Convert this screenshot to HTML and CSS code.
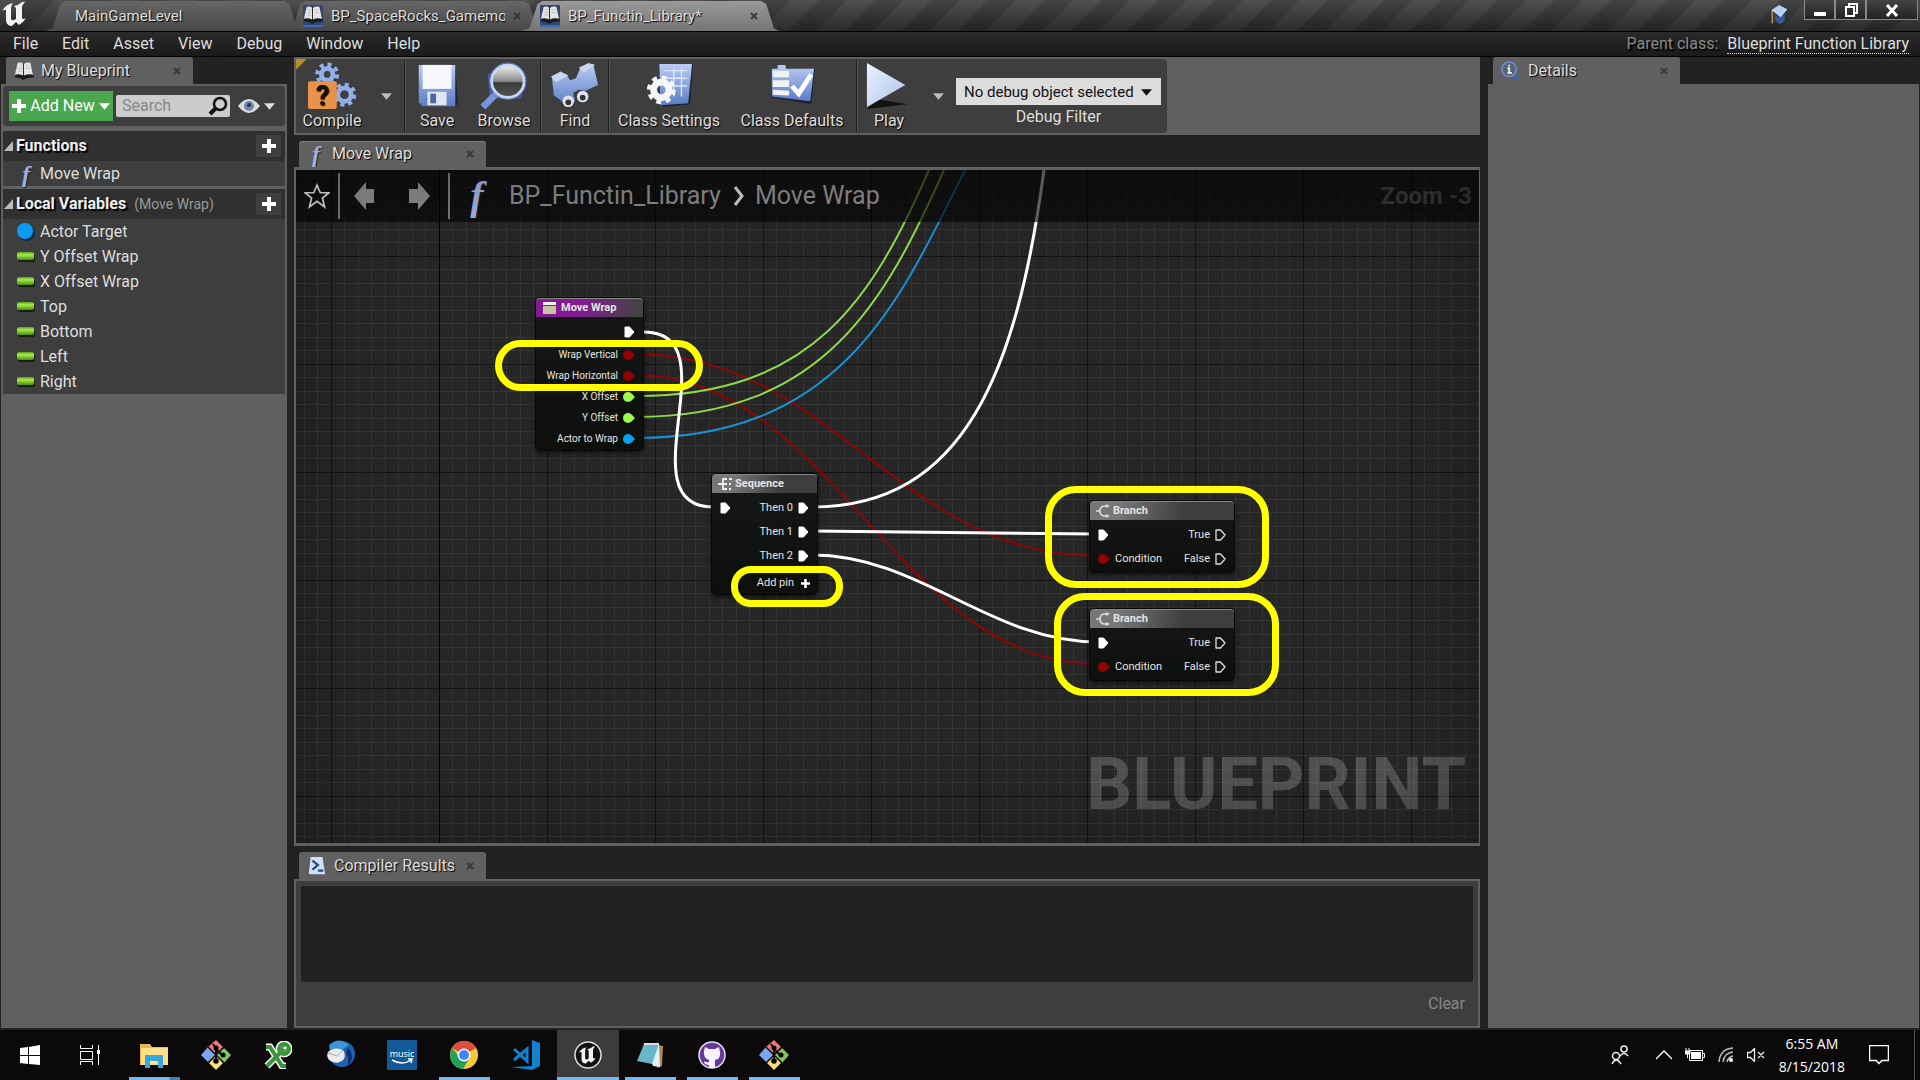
FILE: index.html
```html
<!DOCTYPE html>
<html lang="en">
<head>
<meta charset="utf-8">
<title>BP_Functin_Library</title>
<link rel="stylesheet" href="styles.css">
</head>
<body>
<svg class="defs" aria-hidden="true">
  <defs>
    <linearGradient id="blue" x1="0" y1="0" x2="0" y2="1"><stop offset="0" stop-color="#b9cdf5"/><stop offset="1" stop-color="#5b7cc4"/></linearGradient>
    <linearGradient id="pale" x1="0" y1="0" x2="1" y2="1"><stop offset="0" stop-color="#eef3ff"/><stop offset="1" stop-color="#a9c2ea"/></linearGradient>
    <linearGradient id="lens" x1="0" y1="0" x2="0" y2="1"><stop offset="0" stop-color="#f4f4f4"/><stop offset=".5" stop-color="#8a8a8a"/><stop offset=".55" stop-color="#3c3c3c"/><stop offset="1" stop-color="#555"/></linearGradient>
    <linearGradient id="pill" x1="0" y1="0" x2="0" y2="1"><stop offset="0" stop-color="#5f9e1c"/><stop offset=".35" stop-color="#a4ee4a"/><stop offset="1" stop-color="#4b8a10"/></linearGradient>
  </defs>
  <symbol id="cross" viewBox="0 0 8 8"><path d="M1 1l6 6M7 1L1 7" stroke="#3a3a3a" stroke-width="2"/></symbol>
  <symbol id="plus" viewBox="0 0 14 14"><path d="M5 0h4v5h5v4H9v5H5V9H0V5h5z" fill="#fff"/></symbol>
  <symbol id="down" viewBox="0 0 12 8"><path d="M0 1h12L6 8z" fill="currentColor"/></symbol>
  <symbol id="book" viewBox="0 0 22 22"><path d="M1 18L4 2l6 1 2-1 6 1 4 15-8 1-4 2-3-2z" fill="#1c1c1c"/><path d="M1 15L4 2q4-1 6 1v13q-4-2-9-1zM11 16V3q3-2 7-1l3 13q-6-1-10 1z" fill="#e4e4e4"/><path d="M6 5h3M5 8h4M5 11h4M13 5h3M13 8h4" stroke="#bbb"/></symbol>
  <symbol id="exec" viewBox="0 0 11 12"><path d="M1 1h4.500l4.500 5-4.500 5H1z" fill="#fff" stroke="#fff" stroke-linejoin="round"/></symbol>
  <symbol id="exec-open" viewBox="0 0 11 12"><path d="M1 1h4.500l4.500 5-4.500 5H1z" fill="none" stroke="#ddd" stroke-width="1.300" stroke-linejoin="round"/></symbol>
  <symbol id="pin" viewBox="0 0 12 10"><circle cx="5" cy="5" r="5" fill="currentColor"/><path d="M9 2l3 3-3 3z" fill="currentColor"/></symbol>
  <symbol id="branch" viewBox="0 0 14 14"><path d="M0 7h4M12 2H9Q4 2 4 7t5 5h3" fill="none" stroke="#ddd" stroke-width="1.500"/><path d="M10 0l4 2-4 2zM10 10l4 2-4 2z" fill="#ddd"/></symbol>
  <symbol id="float" viewBox="0 0 18 12"><rect x="1" y="3" width="17" height="8" rx="2" fill="#15200a"/><rect y="1" width="17" height="8" rx="2" fill="url(#pill)"/></symbol>
  <symbol id="git" viewBox="0 0 30 30"><path d="M15 0l7 7-7 8-8-8z" fill="#f2777a"/><path d="M7 7l8 8-7 8-8-8z" fill="#7aa7f5"/><path d="M23 8l7 7-7 8-8-8z" fill="#7fc75a"/><path d="M15 15l7 8-7 7-7-7z" fill="#fbe07a"/><path d="M7 7l16 16M23 7L7 23" stroke="#0b0b0b" stroke-width="1.500"/><path d="M12 4l3 5v12M15 9l6 6" stroke="#0b0b0b" stroke-width="2" fill="none"/><circle cx="15" cy="8" r="2.500"/><circle cx="15" cy="21" r="2.800"/><circle cx="22" cy="15" r="2.500"/></symbol>
  <symbol id="unreal" viewBox="0 0 28 28"><path d="M1 11Q5 4 12 3q-2 2-2 5v11q1 2 3 1l2-1V8l-2-2q5-1 8-4l3 0q-3 3-3 5v11q1 2 4 0-3 5-7 7l-3-3-4 4Q6 26 5 21V10Q3 9 1 11z" fill="#f4f4f4"/></symbol>
</svg>

<header class="titlebar">
  <svg class="logo" viewBox="0 0 28 28"><use href="#unreal"/></svg>
  <nav class="doc-tabs">
    <button class="doc-tab first"><span>MainGameLevel</span></button>
    <button class="doc-tab second"><i class="bookbox"><svg><use href="#book"/></svg></i><span class="clip">BP_SpaceRocks_Gamemode</span><svg class="x"><use href="#cross"/></svg></button>
    <button class="doc-tab active"><i class="bookbox"><svg><use href="#book"/></svg></i><span class="clip">BP_Functin_Library*</span><svg class="x"><use href="#cross"/></svg></button>
  </nav>
  <svg class="cap" viewBox="0 0 20 24"><path d="M2 6v16" stroke="#c08a4a" stroke-width="2"/><path d="M5 11l6 4 6-4v8l-6 4-6-4z" fill="#37598f"/><path d="M1 6l9-6 10 5-8 10z" fill="#b4d2f4"/></svg>
  <div class="window-buttons">
    <button aria-label="Minimize"><svg width="14" height="14"><path d="M1 9h12v4H1z" fill="#fff"/></svg></button>
    <button aria-label="Restore"><svg width="14" height="14"><path d="M5 3V1h8v9h-2M2 4h8v9H2z" fill="none" stroke="#fff" stroke-width="2"/></svg></button>
    <button aria-label="Close" class="wide"><svg width="14" height="14"><path d="M2 2l10 11M12 2L2 13" stroke="#fff" stroke-width="3"/></svg></button>
  </div>
</header>

<nav class="menubar">
  <button>File</button><button>Edit</button><button>Asset</button><button>View</button><button>Debug</button><button>Window</button><button>Help</button>
  <p>Parent class: <a href="#">Blueprint Function Library</a></p>
</nav>

<main class="workspace">
  <aside class="column">
    <div class="tab"><svg class="tab-icon"><use href="#book"/></svg><span>My Blueprint</span><svg class="x"><use href="#cross"/></svg></div>
    <div class="panel side">
      <div class="side-tools">
        <button class="add"><svg width="14" height="14"><use href="#plus"/></svg>Add New<svg width="11" height="8"><use href="#down"/></svg></button>
        <label class="search"><input type="text" placeholder="Search" aria-label="Search"><svg width="20" height="20" viewBox="0 0 20 20"><circle cx="12" cy="8" r="6" fill="none" stroke="#111" stroke-width="2.500"/><path d="M8 12l-6 6" stroke="#111" stroke-width="4"/></svg></label>
        <button class="view" aria-label="View options"><svg width="22" height="16" viewBox="0 0 22 16"><path d="M0 8q11-14 22 0-11 14-22 0z" fill="#dcdcdc"/><circle cx="11" cy="8" r="5" fill="#6f86ad"/><circle cx="11" cy="7" r="2" fill="#26344d"/></svg><svg width="11" height="8"><use href="#down"/></svg></button>
      </div>
      <section class="group">
        <h2><i class="fold"></i>Functions<button aria-label="Add function"><svg width="14" height="14"><use href="#plus"/></svg></button></h2>
        <ul><li><i class="fn">f</i>Move Wrap</li></ul>
      </section>
      <section class="group">
        <h2><i class="fold"></i>Local Variables <small>(Move Wrap)</small><button aria-label="Add variable"><svg width="14" height="14"><use href="#plus"/></svg></button></h2>
        <ul>
          <li><svg width="18" height="18"><ellipse cx="10" cy="10" rx="8" ry="8" fill="#0b2c44"/><circle cx="8" cy="8" r="8" fill="#0b9bf0"/></svg>Actor Target</li>
          <li><svg width="18" height="12"><use href="#float"/></svg>Y Offset Wrap</li>
          <li><svg width="18" height="12"><use href="#float"/></svg>X Offset Wrap</li>
          <li><svg width="18" height="12"><use href="#float"/></svg>Top</li>
          <li><svg width="18" height="12"><use href="#float"/></svg>Bottom</li>
          <li><svg width="18" height="12"><use href="#float"/></svg>Left</li>
          <li><svg width="18" height="12"><use href="#float"/></svg>Right</li>
        </ul>
      </section>
    </div>
  </aside>

  <section class="column center">
    <div class="toolbar">
      <div class="tools">
        <button class="tool compile"><svg viewBox="0 0 50 50"><g fill="none" stroke="#93aee6"><circle cx="20" cy="13" r="6" stroke-width="5"/><circle cx="20" cy="13" r="10" stroke-width="5" stroke-dasharray="4 3.850"/><circle cx="38" cy="34" r="7" stroke-width="5"/><circle cx="38" cy="34" r="10" stroke-width="5" stroke-dasharray="4 3.850"/></g><rect x="0" y="20" width="30" height="29" rx="2" fill="#e8934a"/><text x="15" y="45" text-anchor="middle" class="qmark">?</text></svg>Compile</button>
        <button class="more" aria-label="Compile options"><svg width="11" height="8"><use href="#down"/></svg></button>
        <i class="sep"></i>
        <button class="tool save"><svg viewBox="0 0 50 50"><path d="M8 4h36l3 40-4 2-33-1z" fill="#1e2738"/><path d="M6 3h38v43H10l-4-4z" fill="url(#blue)"/><path d="M10 3h30v25H10z" fill="#f6f8fc"/><path d="M15 31h20v14H15z" fill="#dfe5f1"/><path d="M18 33h6v10h-6z" fill="#4a65a5"/></svg>Save</button>
        <button class="tool browse"><svg viewBox="0 0 50 50"><path d="M8 12h38l-3 26H10z" fill="#415a94"/><path d="M17 33L3 47" stroke="#7595dc" stroke-width="7"/><circle cx="29" cy="20" r="17" fill="url(#lens)" stroke="#c9d6f5" stroke-width="3"/><circle cx="29" cy="20" r="19" fill="none" stroke="#5d7cc0"/></svg>Browse</button>
        <i class="sep"></i>
        <button class="tool find"><svg viewBox="0 0 50 50"><path d="M1 17l15-4 4 6 6-2 5-12 13-3 5 22-13 6-7-1-6 3 2 8-8 6-8-7-6-4z" fill="url(#blue)"/><path d="M0 15l10-5 8 4-13 7zM29 6l10-5 7 2-12 8z" fill="#c9d6f0"/><circle cx="18" cy="41" r="6" fill="#dfe6f2"/><circle cx="33" cy="36" r="6" fill="#dfe6f2"/><circle cx="18" cy="42" r="3" fill="#333"/><circle cx="33" cy="37" r="3" fill="#333"/></svg>Find</button>
        <i class="sep"></i>
        <button class="tool settings"><svg viewBox="0 0 50 50"><path d="M16 2h34l-3 42-28 3z" fill="#1d2433"/><path d="M15 2h34l-4 41-29 2z" fill="url(#blue)"/><path d="M20 9h24M20 17h24M24 25h20M30 6v30M38 6v30" stroke="#dce6fa" stroke-width="1.500"/><g fill="none" stroke="#f4f6fb"><circle cx="17" cy="29" r="8" stroke-width="7"/><circle cx="17" cy="29" r="12" stroke-width="6" stroke-dasharray="4.800 4.620"/></g></svg>Class Settings</button>
        <button class="tool defaults"><svg viewBox="0 0 50 50"><path d="M5 8h44l-4 36L3 37z" fill="#1d2433"/><path d="M10 3h8l1 4h29l-4 34-40-5V7h6z" fill="url(#blue)"/><path d="M5 9h17v7H5zM5 19h17v7H5zM5 29l17 1v5L5 34z" fill="#f0f2f6"/><path d="M25 25l7 8 13-20" fill="none" stroke="#fff" stroke-width="5"/></svg>Class Defaults</button>
        <i class="sep"></i>
        <button class="tool play"><svg viewBox="0 0 50 50"><path d="M2 49l12-10 30 5z" fill="#111"/><path d="M2 1l40 23L2 47z" fill="url(#pale)"/></svg>Play</button>
        <button class="more" aria-label="Play options"><svg width="11" height="8"><use href="#down"/></svg></button>
        <div class="debug">
          <span class="select"><select id="debug"><option>No debug object selected</option></select><svg width="11" height="8"><use href="#down"/></svg></span>
          <label for="debug">Debug Filter</label>
        </div>
      </div>
    </div>

    <div class="tab gold"><i class="fn">f</i><span>Move Wrap</span><svg class="x"><use href="#cross"/></svg></div>
    <div class="graph">
      <svg class="wires">
        <defs><pattern id="grid" x="35" y="86" width="108" height="108" patternUnits="userSpaceOnUse">
          <path d="M13 0v108M27 0v108M40 0v108M54 0v108M67 0v108M81 0v108M94 0v108M0 13h108M0 27h108M0 40h108M0 54h108M0 67h108M0 81h108M0 94h108" transform="translate(.5 .5)" stroke="#343434" fill="none"/>
          <path d="M.5 0v108M0 .5h108" stroke="#131313"/></pattern></defs>
        <rect width="100%" height="100%" fill="url(#grid)"/>
        <path d="M143.500 0v2000" stroke="#000"/>
        <g transform="translate(-296 -170)" fill="none" stroke-width="2">
          <g stroke="#8c0606"><path d="M636 354C830 354 900 556 1096 556"/><path d="M636 375C830 375 900 664 1096 664"/></g>
          <g stroke="#8ed84a"><path d="M636 396C812 396 872 300 929 170"/><path d="M636 417C824 417 886 300 944 170"/></g>
          <path d="M636 438C842 438 900 300 965 170" stroke="#1b8fd0"/>
          <g stroke="#fff" stroke-width="3"><path d="M644 332C733 332 624 507 713 507"/><path d="M812 507C965 507 1017 370 1044 170"/><path d="M812 531L1095 534"/><path d="M812 555C920 555 990 642 1098 642"/></g>
        </g>
      </svg>
      <strong class="watermark">BLUEPRINT</strong>
      <div class="crumbs">
        <button class="star" aria-label="Favorite"><svg width="26" height="26" viewBox="0 0 24 24"><path d="M12 2l3 7h8l-6 5 2 8-7-5-7 5 2-8-6-5h8z" fill="none" stroke="#ddd" stroke-width="1.600"/></svg></button>
        <i class="bar"></i>
        <button class="arrow" aria-label="Back"><svg width="22" height="30" viewBox="0 0 22 30"><path d="M0 15L12 1v7h8v14h-8v7z" fill="#888"/></svg></button>
        <button class="arrow" aria-label="Forward"><svg width="22" height="30" viewBox="0 0 22 30"><path d="M22 15L10 1v7H1v14h9v7z" fill="#888"/></svg></button>
        <i class="bar"></i>
        <i class="fn big">f</i>
        <span>BP_Functin_Library</span>
        <svg width="12" height="20" viewBox="0 0 12 20"><path d="M2 1l7 9-7 9" fill="none" stroke="#ccc" stroke-width="3"/></svg>
        <span>Move Wrap</span>
        <b>Zoom -3</b>
      </div>

      <article class="node entry">
        <h3><svg width="13" height="12"><path d="M0 0h13v3H0z" fill="#eee"/><path d="M0 4h13v8H0z" fill="#c9c2a6"/></svg>Move Wrap</h3>
        <p class="tall"><svg class="exec"><use href="#exec"/></svg></p>
        <p>Wrap Vertical<svg class="pin bool"><use href="#pin"/></svg></p>
        <p>Wrap Horizontal<svg class="pin bool"><use href="#pin"/></svg></p>
        <p>X Offset<svg class="pin num"><use href="#pin"/></svg></p>
        <p>Y Offset<svg class="pin num"><use href="#pin"/></svg></p>
        <p>Actor to Wrap<svg class="pin obj"><use href="#pin"/></svg></p>
      </article>

      <article class="node sequence">
        <h3><svg width="14" height="12" viewBox="0 0 14 12"><path d="M0 6h9M9 1H5v10h4M11 1h3M11 6h2M11 11h2" fill="none" stroke="#eee" stroke-width="1.800"/></svg>Sequence</h3>
        <p class="tall"><svg class="exec in"><use href="#exec"/></svg>Then 0<svg class="exec"><use href="#exec"/></svg></p>
        <p class="tall">Then 1<svg class="exec"><use href="#exec"/></svg></p>
        <p class="tall">Then 2<svg class="exec"><use href="#exec"/></svg></p>
        <button>Add pin<svg width="9" height="9"><use href="#plus"/></svg></button>
      </article>

      <article class="node branch one">
        <h3><svg width="14" height="14"><use href="#branch"/></svg>Branch</h3>
        <p class="tall"><svg class="exec in"><use href="#exec"/></svg>True<svg class="exec"><use href="#exec-open"/></svg></p>
        <p class="tall"><span class="in"><svg class="pin bool"><use href="#pin"/></svg>Condition</span>False<svg class="exec"><use href="#exec-open"/></svg></p>
      </article>
      <article class="node branch two">
        <h3><svg width="14" height="14"><use href="#branch"/></svg>Branch</h3>
        <p class="tall"><svg class="exec in"><use href="#exec"/></svg>True<svg class="exec"><use href="#exec-open"/></svg></p>
        <p class="tall"><span class="in"><svg class="pin bool"><use href="#pin"/></svg>Condition</span>False<svg class="exec"><use href="#exec-open"/></svg></p>
      </article>
      <i class="ring ring-wrap"></i><i class="ring ring-pin"></i><i class="ring ring-one"></i><i class="ring ring-two"></i>
    </div>

    <div class="tab"><svg class="tab-icon" viewBox="0 0 22 22"><path d="M4 1h13l3 19-17 0-1-1z" fill="#cfe0fa"/><path d="M6 5l6 5-6 5M12 16h6" fill="none" stroke="#2c4a80" stroke-width="2.500"/></svg><span>Compiler Results</span><svg class="x"><use href="#cross"/></svg></div>
    <div class="results">
      <div class="log"></div>
      <button>Clear</button>
    </div>
  </section>

  <aside class="column details">
    <div class="tab"><svg class="tab-icon" viewBox="0 0 22 22"><path d="M13 14l6 6" stroke="#4460b4" stroke-width="4"/><circle cx="9" cy="9" r="8" fill="#5a6374" stroke="#6f8bd0" stroke-width="2"/><path d="M9 4v2M7 8h2v5M7 13h5" stroke="#eee" stroke-width="2" fill="none"/></svg><span>Details</span><svg class="x"><use href="#cross"/></svg></div>
    <div class="panel"></div>
  </aside>
</main>

<footer class="taskbar">
  <button class="sys" aria-label="Start"><svg width="20" height="20"><path d="M0 3l8-1v8H0zM9 2l11-2v10H9zM0 11h8v8l-8-1zM9 11h11v9L9 19z" fill="#fff"/></svg></button>
  <button class="sys view-btn" aria-label="Task view"><svg width="20" height="20"><path d="M.500 0v3.500h12V0M.500 6.500h12v8H.500zM.500 20v-3.500h12V20M18.500 0v20" fill="none" stroke="#fff"/><path d="M17 5h3v4h-3z" fill="#fff"/></svg></button>
  <button class="app open stacked" aria-label="File Explorer"><svg width="28" height="26" viewBox="0 0 28 26"><path d="M0 2h10l2 3h16v18H0z" fill="#e9b84e"/><path d="M1 6h27v17H1z" fill="#fddf8c"/><path d="M5 26V13h18v13h-5v-7h-8v7z" fill="#38a8dc"/></svg></button>
  <button class="app" aria-label="Git"><svg width="30" height="30"><use href="#git"/></svg></button>
  <button class="app" aria-label="Key"><svg width="28" height="28" viewBox="0 0 28 28"><g fill="none" stroke="#fff" stroke-width="7"><path d="M2 6h4l12 19h4M3 25L18 10"/><circle cx="20" cy="8" r="5"/></g><g fill="none" stroke="#3b9437" stroke-width="4"><path d="M2 6h4l12 19h4M3 25L18 10"/><circle cx="20" cy="8" r="5"/></g><circle cx="20" cy="8" r="3" fill="#3b9437"/><circle cx="21" cy="7" r="1.500" fill="#fff"/></svg></button>
  <button class="app" aria-label="Mail"><svg width="30" height="30" viewBox="0 0 30 30"><circle cx="17" cy="14" r="13" fill="#1c62b0"/><path d="M4 5q10-9 20 0l-7 5-12 1z" fill="#3c93d8"/><path d="M23 8q8 8 0 18 1-8-2-14z" fill="#0b2f68"/><path d="M3 12q7-6 15-2 3 4 1 9-7 7-15 1-3-4-1-8z" fill="#eceae8"/><path d="M3 13l9 3 6-6" fill="none" stroke="#aaa"/></svg></button>
  <button class="app" aria-label="Music"><svg width="30" height="30" viewBox="0 0 30 30"><rect width="30" height="30" rx="1" fill="#13599a"/><text x="15" y="17" text-anchor="middle" class="music">music</text><path d="M5 20q10 6 19 0M21 19l4 0-1 4" fill="none" stroke="#fff" stroke-width="1.500"/></svg></button>
  <button class="app open" aria-label="Chrome"><svg width="28" height="28" viewBox="0 0 28 28"><circle cx="14" cy="14" r="14" fill="#f6c938"/><path d="M14 14L2 7Q6 0 14 0t12 7z" fill="#dc4b3e"/><path d="M2 7Q-2 15 2 21t11 7l6-10-8 0z" fill="#23a05a"/><circle cx="14" cy="14" r="6.500" fill="#fff"/><circle cx="14" cy="14" r="5" fill="#4285f4"/></svg></button>
  <button class="app" aria-label="Code"><svg width="30" height="30" viewBox="0 0 30 30"><path d="M21 0l8 3v23l-8 4L0 27l21-1z" fill="#1082d0"/><path d="M3 9l13 12V9L3 20" fill="none" stroke="#1082d0" stroke-width="3"/></svg></button>
  <button class="app open current" aria-label="Unreal Editor"><svg width="28" height="28" viewBox="0 0 28 28"><circle cx="14" cy="14" r="13" fill="#111" stroke="#ddd" stroke-width="1.500"/><svg x="4" y="4" width="20" height="20"><use href="#unreal"/></svg></svg></button>
  <button class="app open" aria-label="Notepad"><svg width="28" height="28" viewBox="0 0 28 28"><path d="M22 4l5 1-1 20-5 2z" fill="#b08a4a"/><path d="M8 2h15l1 24-7-1z" fill="#dff0f4"/><path d="M8 3h15l-7 20-15-3z" fill="#69b6c8"/><path d="M8 2h15v2H8z" fill="#ddd"/></svg></button>
  <button class="app open" aria-label="GitHub"><svg width="28" height="28" viewBox="0 0 28 28"><circle cx="14" cy="14" r="13" fill="#67379b" stroke="#e8dff0" stroke-width="1.500"/><path d="M7 6l4 2h6l4-2 1 5q1 7-5 8v8h-6v-3q-5 0-5-4 3 2 5 1l0-2q-6-2-5-9z" fill="#f5f2f8"/></svg></button>
  <button class="app open" aria-label="Git Bash"><svg width="30" height="30"><use href="#git"/></svg></button>
  <div class="tray">
    <svg width="18" height="20" viewBox="0 0 18 20" class="people"><g fill="none" stroke="#eee" stroke-width="1.500"><circle cx="13" cy="4" r="3"/><path d="M9 11q4-5 8 0"/><circle cx="5" cy="11" r="3.500"/><path d="M1 19q4-8 9 0"/></g></svg>
    <svg width="16" height="10"><path d="M0 9l8-8 8 8" fill="none" stroke="#eee" stroke-width="1.500"/></svg>
    <svg width="20" height="14" viewBox="0 0 20 14"><path d="M4.500 2.500h13v10h-13zM18 5.500h1.500v4H18" fill="none" stroke="#fff"/><path d="M6 4h10v7H6z" fill="#fff"/><path d="M0 3h5v3H0zM1 0v3M4 0v3M2.500 6v4" stroke="#fff" fill="#fff"/></svg>
    <svg width="16" height="16" viewBox="0 0 16 16"><g fill="none" stroke="#bbb" stroke-width="1.500"><path d="M1 15Q2 2 15 1M5 15q1-9 10-10M9 15q1-5 6-6"/></g><circle cx="13" cy="13" r="2" fill="#fff"/></svg>
    <svg width="18" height="14" viewBox="0 0 18 14"><path d="M.500 4.500h3l4-4v13l-4-4h-3zM11 4l6 6M17 4l-6 6" fill="none" stroke="#eee" stroke-width="1.300"/></svg>
    <time>6:55 AM<br>8/15/2018</time>
    <svg width="20" height="20"><path d="M.500.500h19v15H13l-3 3-3-3H.500z" fill="none" stroke="#fff" stroke-width="1.500"/></svg>
  </div>
</footer>
</body>
</html>
```
FILE: styles.css
```css
* { box-sizing: border-box; }
body {
  margin: 0;
  min-height: 100vh;
  display: flex;
  flex-direction: column;
  background: #222;
  color: #ddd;
  font: 16px/20px Roboto, sans-serif;
}
button, input, select { font: inherit; color: inherit; border: 0; background: none; padding: 0; margin: 0; }
p, h2, h3, ul { margin: 0; padding: 0; }
ul { list-style: none; }
i { font-style: normal; }
svg { flex: none; }
.defs { position: absolute; width: 0; height: 0; }
.x { width: 8px; height: 8px; }

/* title bar */
.titlebar {
  display: flex;
  height: 31px;
  background:
    linear-gradient(rgba(0,0,0,.05), rgba(0,0,0,.5)),
    repeating-linear-gradient(135deg, #545454 0 18px, #474747 20px 38px, #545454 40px);
}
.logo { width: 30px; height: 28px; }
.doc-tabs { display: flex; margin-left: 15px; flex: 1; }
.doc-tab {
  display: flex;
  align-items: center;
  width: 257px;
  height: 30px;
  margin-top: 1px;
  padding: 0 30px;
  gap: 8px;
  text-align: left;
  text-shadow: 1px 1px 1px #000;
  font-size: 15px;
  background: linear-gradient(#666, #484848);
  clip-path: polygon(0 100%, 3% 90%, 6% 10%, 8% 0, 93% 0, 95% 10%, 98% 90%, 100% 100%);
}
.doc-tab.first { position: relative; z-index: 1; }
.doc-tab.second { margin-left: -17px; padding: 0 18px; }
.doc-tab.active {
  position: relative;
  z-index: 1;
  margin-left: -20px;
  padding: 0 18px;
  background: linear-gradient(#999, #757575);
}
.clip { width: 174px; overflow: hidden; white-space: nowrap; }
.bookbox { width: 20px; height: 22px; background: #33466f; border-bottom: 2px solid #3f6ac0; }
.bookbox svg { width: 20px; height: 20px; display: block; }
.cap { width: 20px; height: 20px; margin: 5px 15px 0 0; }
.window-buttons { display: flex; height: 20px; margin-right: 2px; }
.window-buttons button {
  width: 31px;
  display: grid;
  place-items: center;
  border: 1px solid #888;
  border-top: 0;
  background: linear-gradient(#444, #222);
}
.window-buttons .wide { width: 52px; }

/* menu bar */
.menubar {
  display: flex;
  align-items: center;
  height: 26px;
  padding: 0 11px 0 13px;
  gap: 24px;
  border: solid #000;
  border-width: 1px 0;
  background: linear-gradient(#2a2a2a, #1a1a1a);
}
.menubar p { margin-left: auto; color: #888; text-shadow: 2px 2px 1px #000; }
.menubar a { margin-left: 5px; color: #ddd; text-decoration: none; border-bottom: 1px dotted #ddd; text-shadow: none; line-height: 18px; display: inline-block; }

/* columns */
.workspace { flex: 1; display: grid; grid-template-columns: 286px minmax(0, 1fr) 432px; gap: 0 7px; padding: 0 1px 2px; }
.column { display: flex; flex-direction: column; }
.details { margin-left: 1px; }
.tab {
  display: flex;
  align-items: center;
  width: 187px;
  height: 27px;
  margin-left: 5px;
  padding: 0 12px 0 8px;
  gap: 7px;
  background: #606060;
  border-radius: 3px 3px 0 0;
  text-shadow: 1px 1px 1px #000;
}
.tab span { flex: 1; }
.tab-icon { width: 20px; height: 20px; }
.tab.gold { height: 26px; margin-top: 6px; padding-bottom: 1px; border-top: 1px solid #a88420; }
.panel { flex: 1; background: #606060; }
.fn {
  width: 18px;
  text-align: center;
  font: italic bold 24px/24px "Liberation Serif", serif;
  color: #9fb0dc;
  text-shadow: 1px 1px 1px #222;
}

/* left panel */
.side { padding: 2px; }
.side-tools { display: flex; align-items: center; height: 40px; margin-bottom: 5px; padding: 0 10px 0 6px; background: #3e3e3e; border-radius: 4px; }
.add { display: flex; align-items: center; justify-content: center; gap: 4px; width: 104px; height: 30px; background: #4aa64f; color: #fff; white-space: nowrap; }
.search { display: flex; align-items: center; width: 114px; height: 22px; margin-left: 3px; background: #ccc; border-radius: 2px; }
.search input { width: 92px; padding-left: 6px; color: #333; outline: 0; }
.search input::placeholder { color: #888; opacity: 1; }
.view { display: flex; align-items: center; gap: 4px; margin-left: 8px; }
.group { background: #3e3e3e; margin-bottom: 3px; }
.group h2 { display: flex; align-items: center; height: 30px; padding: 0 4px 0 1px; background: #303030; font-size: 16px; color: #eee; text-shadow: 2px 2px 1px #000; }
.fold { width: 9px; height: 10px; margin-right: 3px; background: #bbb; clip-path: polygon(100% 0, 100% 100%, 0 100%); }
.group small { margin-left: 8px; font-size: 14px; font-weight: 400; color: #999; text-shadow: none; }
.group h2 button { display: grid; place-items: center; width: 25px; height: 22px; margin-left: auto; background: #3f3f3f; border-radius: 2px; }
.group li { display: flex; align-items: center; height: 25px; padding-left: 14px; gap: 5px; }
.group li svg { width: 18px; }

/* toolbar */
.toolbar { height: 78px; padding: 2px; background: #606060; }
.tools {
  display: flex;
  align-items: stretch;
  width: max-content;
  height: 74px;
  padding-right: 6px;
  border-radius: 0 4px 4px 0;
  background: linear-gradient(135deg, #b58e26 7px, #3e3e3e 8px);
}
.tool { display: flex; flex-direction: column; align-items: center; gap: 3px; padding-top: 3px; line-height: 16px; white-space: nowrap; text-shadow: 1px 1px 1px #000; }
.tool svg { width: 48px; height: 48px; }
.compile { width: 72px; }
.save { width: 62px; }
.browse { width: 72px; }
.find { width: 66px; }
.settings { width: 118px; }
.defaults { width: 128px; }
.play { width: 62px; }
.more { width: 36px; display: grid; place-items: center; color: #bbb; }
.sep { width: 2px; background: #555; border-left: 1px solid #222; }
.qmark { font: bold 28px Roboto, sans-serif; fill: #111; }
.debug { display: flex; flex-direction: column; align-items: center; padding-top: 19px; }
.select { position: relative; display: flex; }
.select select { appearance: none; width: 205px; height: 27px; padding-left: 8px; background: #dcdcdc; color: #111; font-size: 15px; }
.select svg { position: absolute; right: 9px; top: 10px; color: #111; pointer-events: none; }
.debug label { line-height: 24px; }

/* graph */
.graph {
  position: relative;
  flex: 1;
  min-height: 600px;
  margin-bottom: 6px;
  overflow: hidden;
  border: solid #606060;
  border-width: 3px 1px 3px 2px;
  background: #262626;
}
.wires { position: absolute; inset: 0; width: 100%; height: 100%; }
.graph::after { content: ""; position: absolute; inset: 0; box-shadow: inset 0 0 90px rgba(0,0,0,.3); pointer-events: none; }
.watermark { position: absolute; right: 13px; bottom: 13px; font-size: 72px; line-height: 90px; color: rgba(255,255,255,.2); }
.crumbs { position: relative; display: flex; align-items: center; height: 52px; padding: 0 7px 0 8px; background: rgba(0,0,0,.6); font-size: 25px; color: #888; }
.star { width: 34px; }
.bar { width: 2px; height: 46px; background: #777; }
.arrow { width: 54px; }
.star svg, .arrow svg { display: block; }
.arrow svg { margin-left: 14px; }
.crumbs .fn { width: 26px; margin: 0 19px 0 14px; }
.fn.big { font-size: 40px; line-height: 40px; }
.crumbs > svg { margin: 0 10px 0 12px; }
.crumbs b { margin-left: auto; font-size: 24px; color: #333; }

.node {
  position: absolute;
  border: 1px solid #080808;
  border-radius: 5px;
  background: linear-gradient(#151816, #0c0f0c);
  box-shadow: 0 2px 5px rgba(0,0,0,.6);
  color: #e4e4e4;
  font-size: 11px;
  line-height: 14px;
  padding-bottom: 1px;
}
.node h3 {
  display: flex;
  align-items: center;
  gap: 3px;
  height: 19px;
  padding-left: 6px;
  margin-bottom: 3px;
  border-top: 1px solid #888;
  border-radius: 4px 4px 0 0;
  font-size: 11px;
  background: linear-gradient(100deg, #777 20%, #3e3e3e 65%);
}
.node p { display: flex; align-items: center; justify-content: flex-end; height: 21px; padding-right: 8px; gap: 5px; }
.node .tall { height: 24px; }
.node .in { margin-right: auto; margin-left: 8px; }
.node span.in { display: flex; align-items: center; gap: 5px; }
.exec { width: 11px; height: 12px; }
.pin { width: 12px; height: 10px; }
.bool { color: #900303; }
.num { color: #9cf94e; }
.obj { color: #09a0f0; }
.entry { left: 239px; top: 127px; width: 109px; font-size: 10px; }
.entry h3 { gap: 5px; padding-left: 7px; background: linear-gradient(100deg, #821b92 40%, #444 95%); }
.sequence { left: 415px; top: 303px; width: 107px; }
.sequence button { display: flex; align-items: center; gap: 7px; height: 20px; margin: 5px 7px 0 auto; }
.branch { left: 793px; width: 146px; }
.one { top: 330px; }
.two { top: 438px; }

.ring { position: absolute; z-index: 2; border: 7px solid #ff0; }
.ring-wrap { left: 199px; top: 170px; width: 208px; height: 51px; border-radius: 26px; }
.ring-pin { left: 435px; top: 396px; width: 112px; height: 41px; border-radius: 20px; }
.ring-one { left: 749px; top: 316px; width: 224px; height: 102px; border-radius: 31px; }
.ring-two { left: 758px; top: 423px; width: 225px; height: 103px; border-radius: 31px; }

/* compiler results */
.results { display: flex; flex-direction: column; align-items: flex-end; height: 149px; padding: 5px; border: 2px solid #606060; background: #3e3e3e; }
.log { width: 100%; height: 96px; background: #222; border-radius: 2px; }
.results button { margin: 12px 8px 0 0; color: #888; }

/* taskbar */
.taskbar { display: flex; height: 50px; background: #0b0909; }
.taskbar button { display: grid; place-items: center; position: relative; }
.sys { width: 60px; }
.view-btn { margin-right: 3px; }
.app { width: 62px; }
.app.open::after { content: ""; position: absolute; bottom: 0; left: 6px; right: 5px; height: 3px; background: #76b9ed; }
.app.stacked::after { background: linear-gradient(90deg, #76b9ed 40px, #4d7ca2 41px); }
.app.current { background: #3c3c3c; }
.app.current::after { left: 0; right: 0; }
.music { font: 9px "Open Sans", sans-serif; fill: #fff; }
.tray { display: flex; align-items: center; gap: 13px; margin-left: auto; margin-right: 5px; padding-right: 25px; border-right: 1px solid #555; height: 50px; }
.people { margin-right: 14px; }
.tray time { text-align: center; font: 14px/23px "Open Sans", sans-serif; color: #fff; margin: 0 11px 0 1px; }
```
